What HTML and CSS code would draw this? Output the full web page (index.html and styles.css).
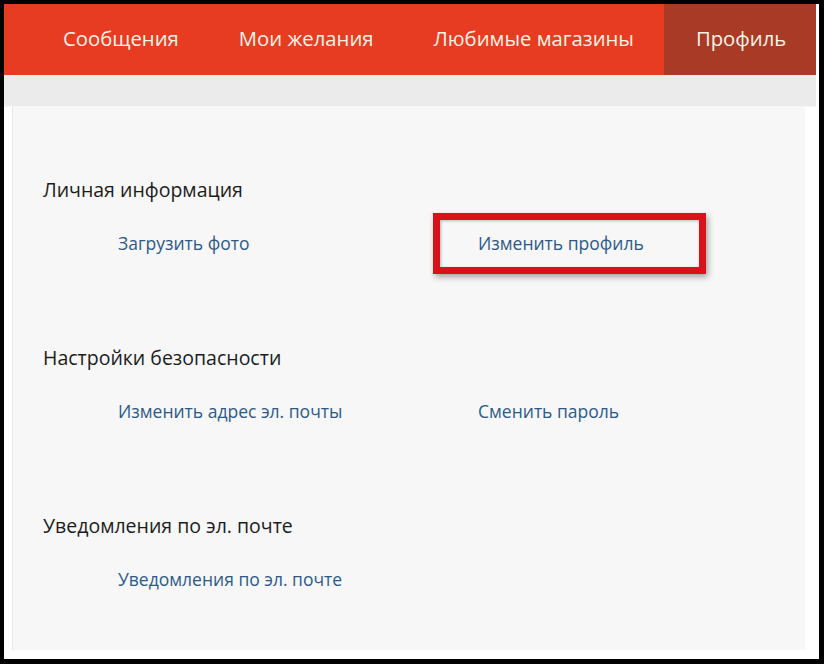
FILE: index.html
```html
<!DOCTYPE html>
<html lang="ru">
<head>
<meta charset="utf-8">
<title>Профиль</title>
<link rel="stylesheet" href="styles.css">
</head>
<body>
<div class="frame">
  <nav class="nav">
    <a class="tab">Сообщения</a>
    <a class="tab">Мои желания</a>
    <a class="tab">Любимые магазины</a>
    <a class="tab active">Профиль</a>
  </nav>
  <div class="strip"></div>
  <main class="panel">
    <section class="section">
      <h2 class="section-title">Личная информация</h2>
      <div class="links">
        <a class="link">Загрузить фото</a>
        <a class="link"><span class="highlight">Изменить профиль</span></a>
      </div>
    </section>
    <section class="section">
      <h2 class="section-title">Настройки безопасности</h2>
      <div class="links">
        <a class="link">Изменить адрес эл. почты</a>
        <a class="link">Сменить пароль</a>
      </div>
    </section>
    <section class="section">
      <h2 class="section-title">Уведомления по эл. почте</h2>
      <div class="links">
        <a class="link">Уведомления по эл. почте</a>
      </div>
    </section>
  </main>
</div>
</body>
</html>
```
FILE: styles.css
```css
html, body {
  margin: 0;
  padding: 0;
  background: #000;
}
body {
  font-family: "Open Sans", "Noto Sans", sans-serif;
}
.frame {
  margin: 4px 5px 5px 4px;
  height: 655px;
  background: #fff;
  display: flex;
  flex-direction: column;
  box-sizing: border-box;
  padding-right: 3px;
  overflow: hidden;
}
.nav {
  flex-shrink: 0;
  height: 71px;
  background: #e73c22;
  display: flex;
  align-items: stretch;
  padding-left: 29px;
}
.tab {
  display: flex;
  align-items: center;
  padding: 0 30px 4px;
  color: #fff3e6;
  font-size: 20.3px;
  white-space: nowrap;
}
.tab.active {
  flex: 1;
  background: #a83a26;
  padding: 0 0 4px 32px;
}
.strip {
  flex-shrink: 0;
  height: 31px;
  background: #ebebeb;
  border-bottom: 1px solid #f6f6f6;
}
.panel {
  flex: 1;
  min-height: 0;
  margin: 0 11px 9px 8px;
  background: #f7f7f7;
  border-left: 1px solid #e6e6e6;
  padding: 71px 0 0 30px;
}
.section {
  margin-bottom: 92px;
}
.section-title {
  margin: 0 0 30px;
  font-size: 19.5px;
  line-height: 24px;
  font-weight: 400;
  color: #1c1c1c;
}
.links {
  display: grid;
  grid-template-columns: 360px auto;
  padding-left: 75px;
  line-height: 22px;
}
.link {
  font-size: 17.5px;
  color: #2c5a88;
  white-space: nowrap;
}
.highlight {
  position: relative;
  display: inline-block;
}
.highlight::after {
  content: "";
  position: absolute;
  left: -45px;
  top: -19px;
  right: -62px;
  bottom: -20px;
  border: 7px solid #d8111a;
  box-shadow: 2px 3px 6px rgba(0, 0, 0, 0.35), inset 1px 1px 3px rgba(0, 0, 0, 0.25);
}
```
